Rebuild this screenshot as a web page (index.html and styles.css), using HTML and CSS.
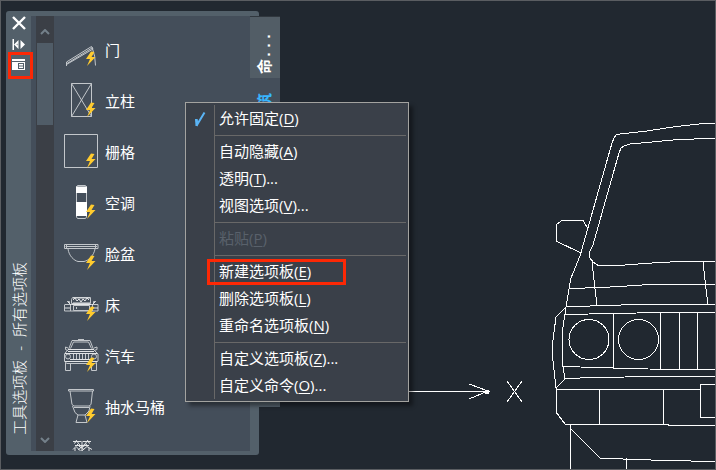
FILE: index.html
```html
<!DOCTYPE html>
<html lang="zh-CN">
<head>
<meta charset="utf-8">
<title>工具选项板</title>
<link rel="stylesheet" href="styles.css">
</head>
<body>
<main class="canvas">
  <svg class="drawing" viewBox="0 0 716 470" aria-hidden="true">
    <!-- roof, windscreen and mirror -->
    <polyline points="569,289 571,278 580,256 612,143 614,138 616,135 620,134 647,131 673,127 703,123.5 716,123"/>
    <polyline points="716,138 673,140 652,142 630,144 624,146 621,148 619,153 602,213 593,245 589,253 590,258 593,262 596,264 599,266 625,265 652,263 679,261.5 716,261.5"/>
    <polyline points="588,229 583,220.5 562,220.5 557,224 556,241 581,253"/>
    <!-- bonnet -->
    <polyline points="592,262 595,289 597,305"/>
    <polyline points="703,262 706,289 708,304"/>
    <polyline points="569,288.5 602,287.5 627,286 650,284.5 716,284.5"/>
    <polyline points="566,307 590,306 637,304.5 716,304.5"/>
    <!-- lamps and grille -->
    <polyline points="569,289 566,307 565,314 562,333 562,343 563,367 565,379 556,388"/>
    <polyline points="566,307 556,317 553,340 552,352 556,388 556,412 565,424"/>
    <polyline points="565,314.5 589,314 590,313.5 637,313 638,312.5 716,312.5"/>
    <circle cx="589" cy="339.5" r="20"/>
    <circle cx="638.5" cy="339.5" r="20"/>
    <path d="M613.5 313V368M660.5 312V369M679.5 312V369M697.5 312V369"/>
    <polyline points="563,366.5 580,367 613,367.5 614,368.5 648,369 716,369.5"/>
    <polyline points="565,378.5 595,377.5 655,376.5 716,376.5"/>
    <!-- bumper -->
    <path d="M556 389.5H700M599.5 389V424M663.5 389V424M565 424.5H668L669 425.5H716M716 384.5H700.5V417.5H716"/>
    <path d="M570.5 425V470M570 428L585 443L600 458L623 459L665 460.5L716 461.5M626.5 458V470"/>
    <!-- X axis -->
    <path d="M400 391.5H490M469 384L488 391L469 399M507 381L522 402M522 381L507 402"/>
    <path class="tip" d="M485 390H488V393H485Z"/>
  </svg>

  <section class="palette" aria-label="工具选项板">
    <header class="titlebar">
      <div class="title-buttons">
        <button type="button" aria-label="关闭"><svg viewBox="0 0 14 14"><path d="M1 1L13 13M13 1L1 13" stroke="#fff" stroke-width="2.4"/></svg></button>
        <button type="button" aria-label="自动隐藏"><svg viewBox="0 0 14 14"><path d="M.5 2H2V13H.5Z" fill="#fff"/><path d="M2 7.500L6.500 3V12ZM8.500 3L13 7.500L8.500 12Z" fill="#fff"/><path d="M4.500 7.500L5.500 6.500V8.500Z" fill="#53606a"/></svg></button>
        <button type="button" class="marked" aria-label="特性"><svg viewBox="0 0 14 14"><path d="M0 1H13V3H0ZM0 4H13V12H0Z" fill="#fff"/><path d="M6.500 5.500H12M6.500 10.500H12M6.500 8H12M6.500 5V11M11.500 5V11" stroke="#53606a"/></svg></button>
      </div>
      <h1 class="title">工具选项板<span class="dash">-</span>所有选项板</h1>
    </header>
    <div class="scrollbar">
      <button type="button" aria-label="向上"><svg viewBox="0 0 10 6"><path d="M1 5L5 1L9 5"/></svg></button>
      <div class="thumb"></div>
      <button type="button" class="down" aria-label="向下"><svg viewBox="0 0 10 6"><path d="M1 1L5 5L9 1"/></svg></button>
    </div>
    <ul class="tools">
      <li><button type="button" class="tool"><svg viewBox="0 0 35 35"><path d="M2.500 34V30L27.500 14.500L29 17L2.500 32.500M3 31.500L28 16M28 15Q31.500 24 31.500 33.500"/><path class="bolt" d="M27 19.500L22 27H26L23 34L31.500 25H27.500L30.500 20Z"/></svg>门</button></li>
      <li><button type="button" class="tool"><svg viewBox="0 0 35 35"><path d="M7.500 .5H27.500V33.500H7.500ZM7.500 .5L27.500 33.500M27.500 .5L7.500 33.500"/><path class="bolt" d="M27 19.500L22 27H26L23 34L31.500 25H27.500L30.500 20Z"/></svg>立柱</button></li>
      <li><button type="button" class="tool"><svg viewBox="0 0 35 35"><path d="M.5 .5H33.500V33.500H.5Z"/><path class="bolt" d="M27 19.500L22 27H26L23 34L31.500 25H27.500L30.500 20Z"/></svg>栅格</button></li>
      <li><button type="button" class="tool"><svg viewBox="0 0 35 35"><path d="M13.500 .5H21.500L22.500 2V32L21.500 33.500H13.500L12.500 32V2Z"/><path d="M12 1.500H23V8H12ZM12 17H23V31H12Z" class="solid"/><path class="bolt" d="M27 19.500L22 27H26L23 34L31.500 25H27.500L30.500 20Z"/></svg>空调</button></li>
      <li><button type="button" class="tool"><svg viewBox="0 0 35 35"><path d="M.5 8.500H34V12.500H.5ZM1.500 10.500H33M2.500 8.500V12M31.500 8.500V12M4 13C5 20 10 24.500 14 25.500H20C25 24.500 30 19 31 13"/><path class="bolt" d="M27 19.500L22 27H26L23 34L31.500 25H27.500L30.500 20Z"/></svg>脸盆</button></li>
      <li><button type="button" class="tool"><svg viewBox="0 0 35 35"><path d="M8.500 10.500H26.500V16.500H7.500V12.500ZM1 17.500H34M.5 17.500V24H34V17.500M6.500 17.500V24M28.500 17.500V24M9.500 18.500H25.500V23.500H9.500ZM12.500 20V22M3 14.500H5.500V17M32 14.500H29.500V17"/><path class="thick" d="M9 13L11 11L13 14L15 12L17 15L19 12L21 14L23 11L25 13M9 16H26M4 15L7 18M31 15L28 18M1 21H6M29 21H34M9 11H26M8 17.500H27"/><path class="bolt" d="M27 19.500L22 27H26L23 34L31.500 25H27.500L30.500 20Z"/></svg>床</button></li>
      <li><button type="button" class="tool"><svg viewBox="0 0 35 35"><path d="M14 1.500H20M4.500 11.500L8 2.500H26L29.500 11.500ZM6.500 10.500L9.500 4H24.500L27.500 10.500M4 10L1.500 9V11.500L4 12.500M30 10L33 9V11.500L30 12.500M3.500 12L.5 16V23.500L3 25.500H31L34 23V16L30 12M9.500 16V21M12.500 16V21M15.500 16V21M18.500 16V21M21.500 16V21M24.500 16V21M1.500 25V32.500H6.500V26M27.500 26V32.500H32.500V25"/><circle cx="4" cy="18.500" r="2.500"/><circle cx="30" cy="18.500" r="2.500"/><path class="thick" d="M4 13.500H30M1 15.500H33M6 21.500H28M1 23.500H33M4 11.500H30"/><path class="bolt" d="M27 19.500L22 27H26L23 34L31.500 25H27.500L30.500 20Z"/></svg>汽车</button></li>
      <li><button type="button" class="tool"><svg viewBox="0 0 35 35"><path d="M4.500 .5H29.500V2H4.500ZM6 2L8 15.500L10 17H25L27 15.500L28.500 2M8.500 17L11 23.500L14 26H21L25 22L26 17M14 26L12 33.500H23L21 26M10 18.500H25"/><path class="bolt" d="M27 19.500L22 27H26L23 34L31.500 25H27.500L30.500 20Z"/></svg>抽水马桶</button></li>
      <li><button type="button" class="tool" aria-label="植物"><svg viewBox="0 0 35 35"><path class="thick" d="M9 1.500H17M19 1.500H27M12 0L15 4M24 0L21 4M11 5.500H25M13 4L17 8L23 4M9 9.500L12 6.500L17 11.500L23 6.500L28 9.500M11 8V12M25 8V12M15 4L20 10M21 4L14 10M7 11.500H29M10 3.500L13 1M26 3.500L23 1M18 1V11"/></svg></button></li>
    </ul>
    <nav class="tabs" aria-label="选项板">
      <button type="button" class="tab command"><span>命...</span></button>
      <button type="button" class="tab current"><span>建筑</span></button>
    </nav>
  </section>

  <div class="menu" role="menu">
    <button type="button" role="menuitemcheckbox" aria-checked="true"><svg class="check" viewBox="0 0 12 16"><path d="M2.500 8.500L3.500 13L10.500 1.500"/><path d="M1 8H3.500V15H1.500Z" class="check-foot"/></svg>允许固定(<u>D</u>)</button>
    <hr>
    <button type="button" role="menuitem">自动隐藏(<u>A</u>)</button>
    <button type="button" role="menuitem">透明(<u>T</u>)...</button>
    <button type="button" role="menuitem">视图选项(<u>V</u>)...</button>
    <hr>
    <button type="button" role="menuitem" disabled>粘贴(<u>P</u>)</button>
    <hr>
    <button type="button" role="menuitem" class="marked">新建选项板(<u>E</u>)</button>
    <button type="button" role="menuitem">删除选项板(<u>L</u>)</button>
    <button type="button" role="menuitem">重命名选项板(<u>N</u>)</button>
    <hr>
    <button type="button" role="menuitem">自定义选项板(<u>Z</u>)...</button>
    <button type="button" role="menuitem">自定义命令(<u>O</u>)...</button>
  </div>
</main>
</body>
</html>
```
FILE: styles.css
```css
*,
*::after {
  box-sizing: border-box;
}

body {
  margin: 0;
  font-family: "Open Sans", "Noto Sans CJK SC", sans-serif;
  font-size: 15px;
  color: #fff;
}

button {
  display: flex;
  align-items: center;
  padding: 0;
  border: 0;
  background: none;
  color: inherit;
  font: inherit;
}

.canvas {
  position: relative;
  height: 100vh;
  overflow: hidden;
  border: 1px solid #5a5d61;
  background: #212830;
}

.drawing {
  position: absolute;
  top: -1px;
  left: -1px;
  width: 716px;
  fill: none;
  stroke: #fff;
  shape-rendering: crispEdges;
}

.drawing .tip {
  fill: #fff;
}

/* Floating palette window */
.palette {
  position: absolute;
  top: 10px;
  bottom: 14px;
  left: 5px;
  display: flex;
  width: 253px;
  padding: 5px 9px 4px 0;
  border-radius: 3px;
  background: #53606a;
}

.titlebar {
  display: flex;
  flex: 0 0 25px;
  flex-direction: column;
  justify-content: space-between;
  align-items: center;
  min-width: 0;
  padding-bottom: 16px;
}

.title-buttons {
  display: flex;
  flex-direction: column;
  align-items: center;
  gap: 7px;
}

.title-buttons svg {
  width: 14px;
  height: 14px;
}

.title {
  margin: 0;
  font-size: 15px;
  font-weight: 300;
  line-height: 22px;
  white-space: nowrap;
  writing-mode: vertical-rl;
  text-orientation: sideways;
  transform: rotate(180deg);
}

.dash {
  padding: 9px 0;
}

.scrollbar {
  display: flex;
  flex: 0 0 23px;
  flex-direction: column;
  padding-top: 5px;
  border-left: 5px solid #444e5a;
  background: #3b3f46;
}

.scrollbar button {
  justify-content: center;
  flex: 0 0 22px;
}

.scrollbar svg {
  width: 10px;
  height: 6px;
  fill: none;
  stroke: #74808a;
  stroke-width: 2;
}

.thumb {
  flex: 0 0 19%;
  margin: 0 1px;
  background: #505c67;
}

.scrollbar .down {
  margin-top: auto;
}

.tools {
  flex: 1;
  margin: 0;
  padding: 8px 0 0 10px;
  overflow: hidden;
  background: #444e5a;
  list-style: none;
}

.tool {
  gap: 6px;
  height: 51px;
  line-height: 20px;
}

.tool svg {
  width: 35px;
  height: 35px;
  fill: none;
  stroke: #c3c7cb;
}

.tool .solid {
  fill: #fff;
  stroke: none;
}

.tool .thick {
  stroke: #e2e4e6;
}

.tool .bolt {
  fill: #ffcb2e;
  stroke: none;
}

/* Tabs hang outside the right edge of the palette */
.tabs {
  position: absolute;
  top: 5px;
  right: -21px;
  bottom: 48px;
  display: flex;
  flex-direction: column;
  width: 30px;
  padding-bottom: 6px;
  border-top: 1px solid #30373e;
  background: #53606a;
}

.tab {
  justify-content: center;
  padding-right: 3px;
  font-size: 15px;
}

.tab span {
  writing-mode: vertical-rl;
  text-orientation: sideways;
  transform: rotate(180deg);
}

.command {
  flex: 0 0 61px;
  padding-top: 12px;
  background: #525d66;
  font-family: "Liberation Mono", "Noto Sans CJK SC", monospace;
  font-weight: 700;
}

.current {
  flex: 1;
  align-items: flex-start;
  padding-top: 15px;
  background: #444e5a;
  color: #38b6ff;
  font-weight: 700;
}

/* Context menu */
.menu {
  position: absolute;
  top: 101px;
  left: 184px;
  width: 224px;
  padding: 2px;
  border: 1px solid #a3a3a0;
  background: linear-gradient(#686868, #686868) 28px 2px / 1px calc(100% - 4px) no-repeat #3a4049;
  box-shadow: 4px 4px 4px #0006;
}

.menu button {
  position: relative;
  width: 100%;
  height: 27px;
  padding-left: 31px;
  line-height: 27px;
}

.menu button:disabled {
  color: #59616b;
}

.menu hr {
  height: 1px;
  margin: 3px 0 2px 27px;
  border: 0;
  background: #686868;
}

.menu u {
  text-underline-offset: 2px;
}

.check {
  position: absolute;
  top: 6px;
  left: 6px;
  width: 12px;
  height: 16px;
  fill: none;
  stroke: #5ab4f5;
  stroke-width: 2;
}

.check-foot {
  fill: #5ab4f5;
  stroke: none;
}

/* Red call-outs */
.marked {
  position: relative;
}

.marked::after {
  position: absolute;
  border: 3px solid #fc2805;
  content: "";
}

.title-buttons .marked::after {
  inset: -6px -7px -7px -4px;
}

.menu .marked::after {
  top: 1px;
  left: 19px;
  width: 139px;
  height: 26px;
}
```
